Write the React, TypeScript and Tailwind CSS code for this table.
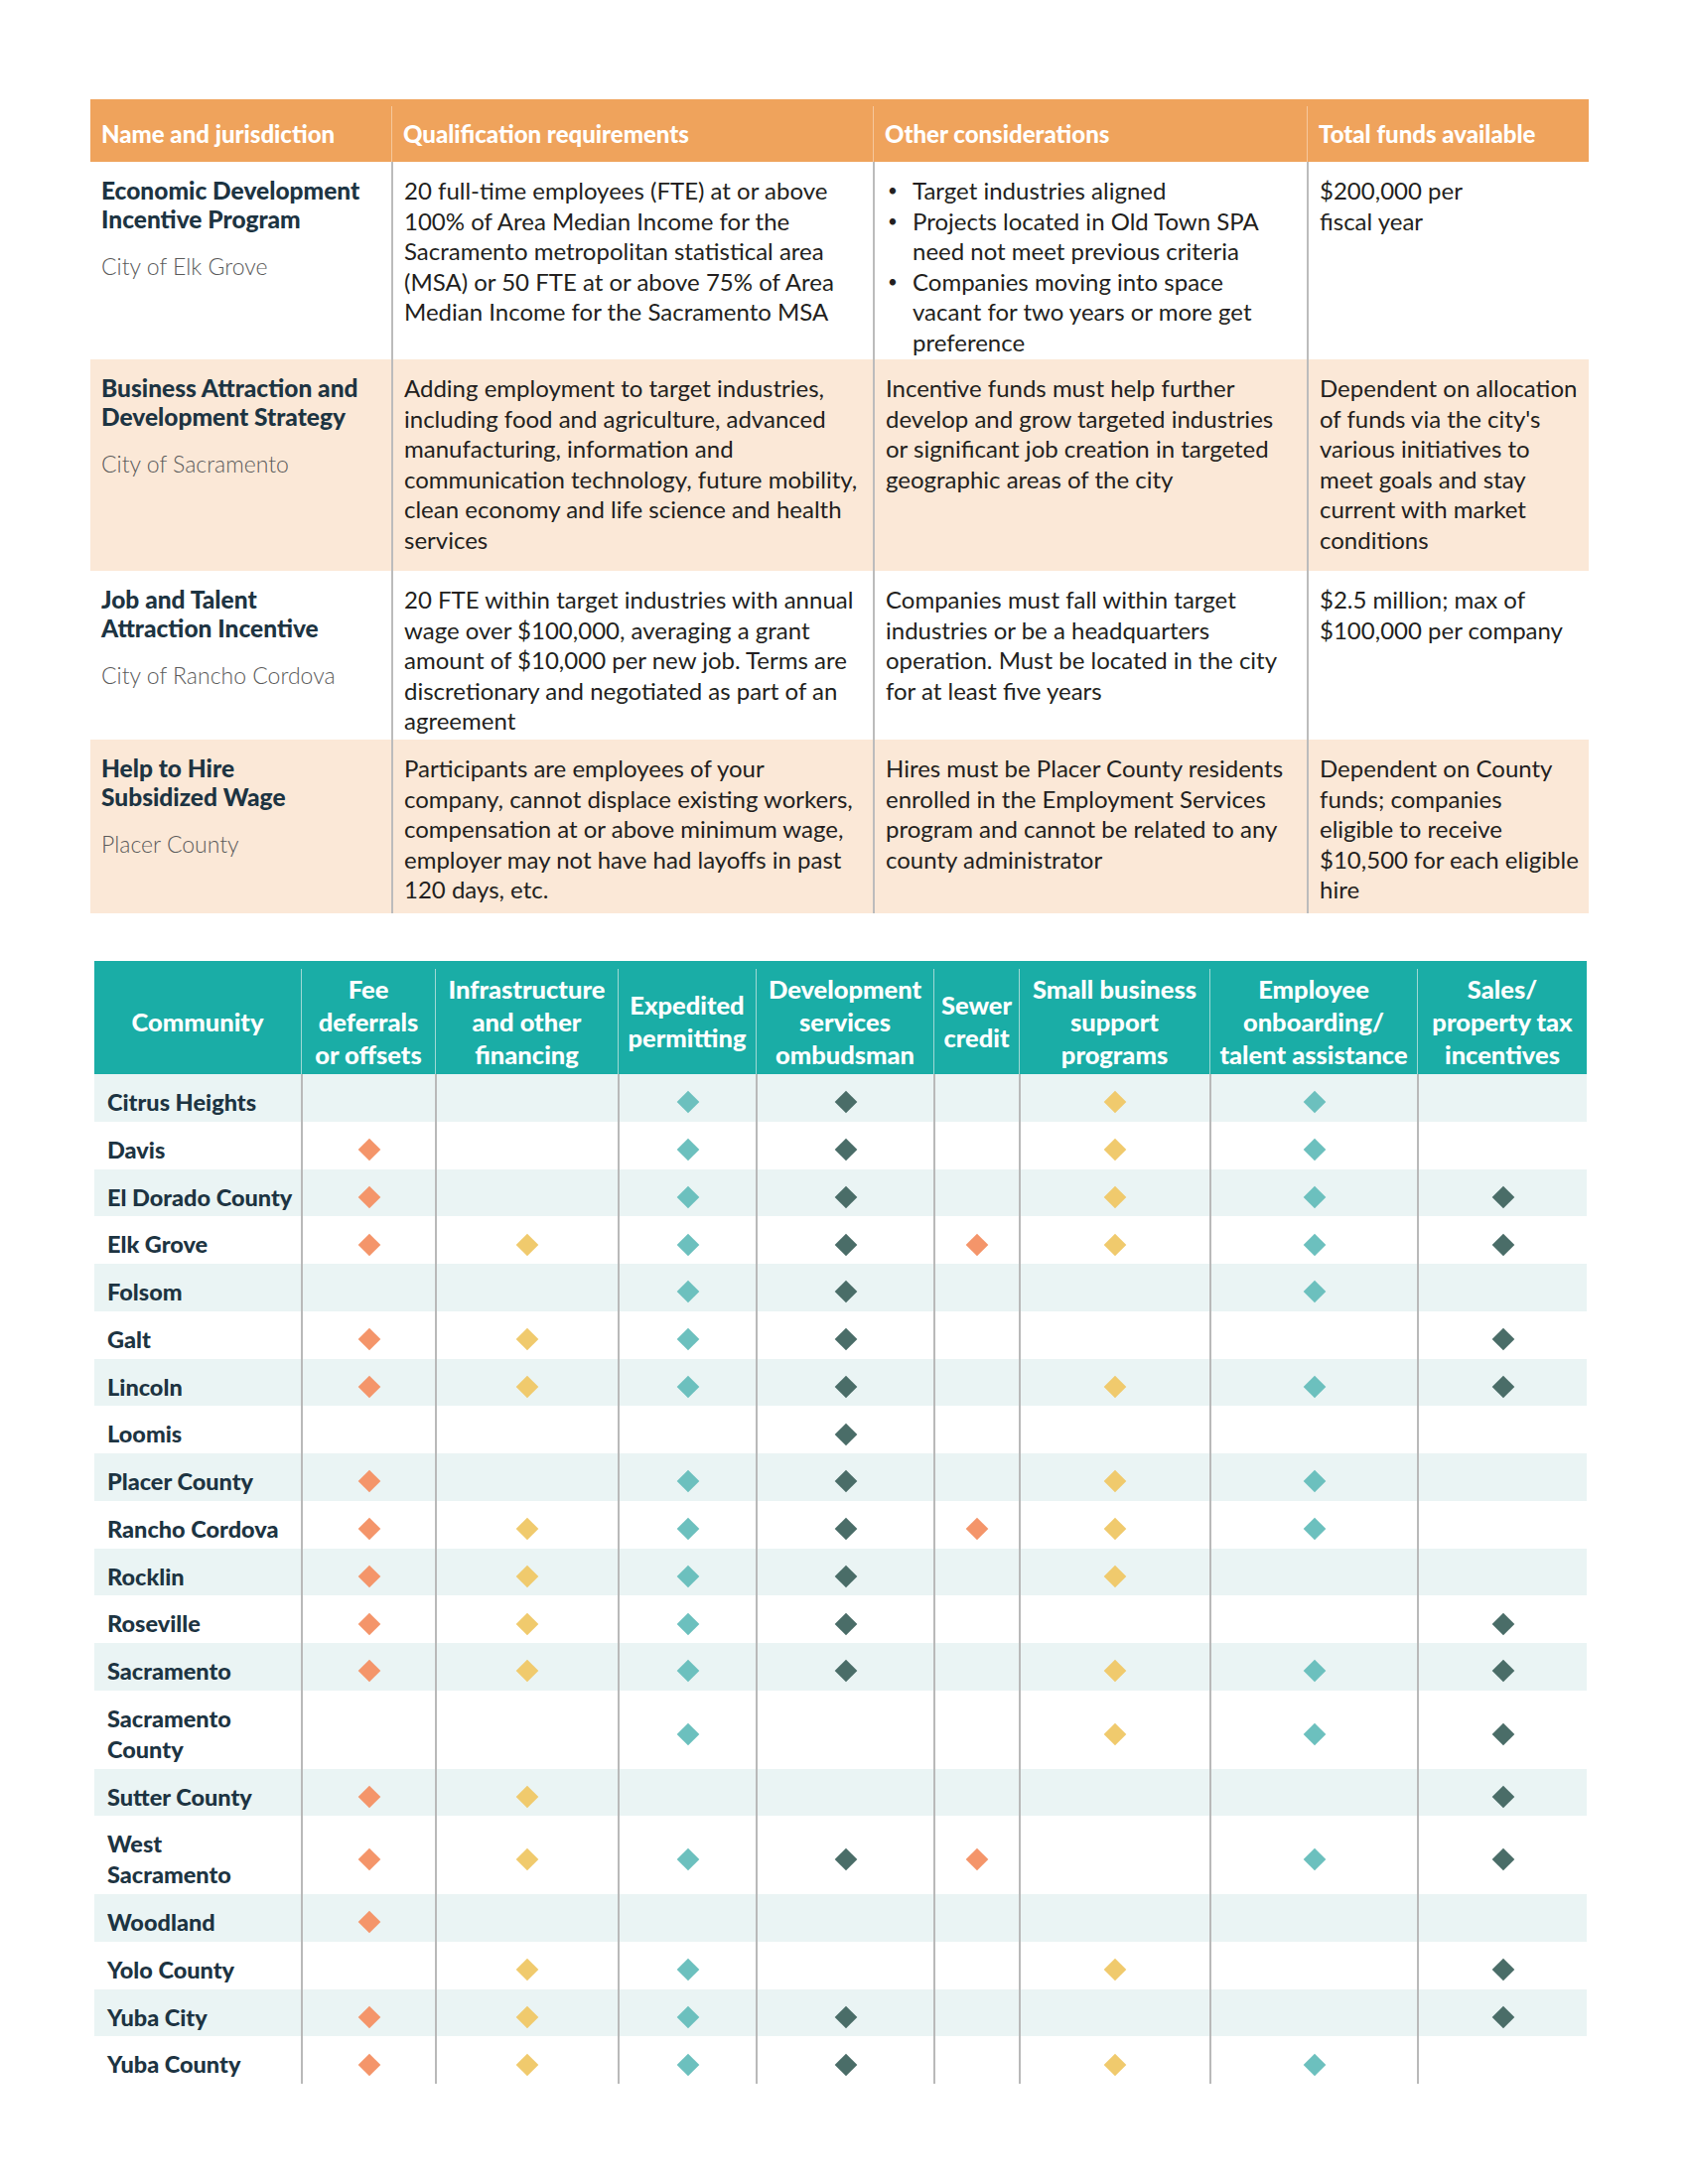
import React from "react";

type Prog = {
  name: string[];
  place: string;
  qual: string[];
  other: string[][] | string[];
  funds: string[];
  bullets?: boolean;
  tint: boolean;
  h: string;
};

const programs: Prog[] = [
  {
    name: ["Economic Development", "Incentive Program"],
    place: "City of Elk Grove",
    qual: [
      "20 full-time employees (FTE) at or above",
      "100% of Area Median Income for the",
      "Sacramento metropolitan statistical area",
      "(MSA) or 50 FTE at or above 75% of Area",
      "Median Income for the Sacramento MSA",
    ],
    other: [
      ["Target industries aligned"],
      ["Projects located in Old Town SPA", "need not meet previous criteria"],
      ["Companies moving into space", "vacant for two years or more get", "preference"],
    ],
    bullets: true,
    funds: ["$200,000 per", "fiscal year"],
    tint: false,
    h: "h-[199px]",
  },
  {
    name: ["Business Attraction and", "Development Strategy"],
    place: "City of Sacramento",
    qual: [
      "Adding employment to target industries,",
      "including food and agriculture, advanced",
      "manufacturing, information and",
      "communication technology, future mobility,",
      "clean economy and life science and health",
      "services",
    ],
    other: [
      "Incentive funds must help further",
      "develop and grow targeted industries",
      "or significant job creation in targeted",
      "geographic areas of the city",
    ],
    funds: [
      "Dependent on allocation",
      "of funds via the city's",
      "various initiatives to",
      "meet goals and stay",
      "current with market",
      "conditions",
    ],
    tint: true,
    h: "h-[213px]",
  },
  {
    name: ["Job and Talent", "Attraction Incentive"],
    place: "City of Rancho Cordova",
    qual: [
      "20 FTE within target industries with annual",
      "wage over $100,000, averaging a grant",
      "amount of $10,000 per new job. Terms are",
      "discretionary and negotiated as part of an",
      "agreement",
    ],
    other: [
      "Companies must fall within target",
      "industries or be a headquarters",
      "operation. Must be located in the city",
      "for at least five years",
    ],
    funds: ["$2.5 million; max of", "$100,000 per company"],
    tint: false,
    h: "h-[170px]",
  },
  {
    name: ["Help to Hire", "Subsidized Wage"],
    place: "Placer County",
    qual: [
      "Participants are employees of your",
      "company, cannot displace existing workers,",
      "compensation at or above minimum wage,",
      "employer may not have had layoffs in past",
      "120 days, etc.",
    ],
    other: [
      "Hires must be Placer County residents",
      "enrolled in the Employment Services",
      "program and cannot be related to any",
      "county administrator",
    ],
    funds: [
      "Dependent on County",
      "funds; companies",
      "eligible to receive",
      "$10,500 for each eligible",
      "hire",
    ],
    tint: true,
    h: "h-[175px]",
  },
];

const columns = [
  { label: ["Fee", "deferrals", "or offsets"], color: "bg-[#f4956a]" },
  { label: ["Infrastructure", "and other", "financing"], color: "bg-[#f0ca6d]" },
  { label: ["Expedited", "permitting"], color: "bg-[#6cc0be]" },
  { label: ["Development", "services", "ombudsman"], color: "bg-[#4a6d68]" },
  { label: ["Sewer", "credit"], color: "bg-[#f4956a]" },
  { label: ["Small business", "support", "programs"], color: "bg-[#f0ca6d]" },
  { label: ["Employee", "onboarding/", "talent assistance"], color: "bg-[#6cc0be]" },
  { label: ["Sales/", "property tax", "incentives"], color: "bg-[#4a6d68]" },
];

// x = program offered, . = not offered (one char per column above)
const communities: [string[], string][] = [
  [["Citrus Heights"], "..xx.xx."],
  [["Davis"], "x.xx.xx."],
  [["El Dorado County"], "x.xx.xxx"],
  [["Elk Grove"], "xxxxxxxx"],
  [["Folsom"], "..xx..x."],
  [["Galt"], "xxxx...x"],
  [["Lincoln"], "xxxx.xxx"],
  [["Loomis"], "...x...."],
  [["Placer County"], "x.xx.xx."],
  [["Rancho Cordova"], "xxxxxxx."],
  [["Rocklin"], "xxxx.x.."],
  [["Roseville"], "xxxx...x"],
  [["Sacramento"], "xxxx.xxx"],
  [["Sacramento", "County"], "..x..xxx"],
  [["Sutter County"], "xx.....x"],
  [["West", "Sacramento"], "xxxxx.xx"],
  [["Woodland"], "x......."],
  [["Yolo County"], ".xx..x.x"],
  [["Yuba City"], "xxxx...x"],
  [["Yuba County"], "xxxx.xx."],
];

const colWidths = ["w-[208px]", "w-[135px]", "w-[184px]", "w-[139px]", "w-[179px]", "w-[86px]", "w-[192px]", "w-[209px]", "w-[171px]"];

const Lines = ({ lines }: { lines: string[] }) => (
  <>
    {lines.map((l, i) => (
      <span key={i} className="block whitespace-nowrap">
        {l}
      </span>
    ))}
  </>
);

const Diamond = ({ color }: { color: string }) => (
  <span className={`block h-[16px] w-[16px] rotate-45 ${color}`} />
);

const ProgramTable = () => (
  <div className="w-[1509px]">
    <div className="flex h-[63px] bg-[#efa35c] pt-[7px] text-[24px] font-black text-white">
      <div className="flex w-[303px] items-center px-[11px]">Name and jurisdiction</div>
      <div className="flex w-[485px] items-center border-l border-[#f6c89c] px-[11px]">Qualification requirements</div>
      <div className="flex w-[437px] items-center border-l border-[#f6c89c] px-[11px]">Other considerations</div>
      <div className="flex w-[284px] items-center border-l border-[#f6c89c] px-[11px]">Total funds available</div>
    </div>
    {programs.map((p, i) => (
      <div
        key={i}
        className={`flex ${p.h} text-[24px] leading-[30.5px] text-[#231f20] ${p.tint ? "bg-[#fbe8d7]" : "bg-white"}`}
      >
        <div className="w-[303px] px-[11px] pt-[14px]">
          <div className="text-[24.5px] font-black leading-[29px] text-[#1d3442]">
            <Lines lines={p.name} />
          </div>
          <div className="mt-[18px] text-[23px] font-light text-[#5b5b5b]">{p.place}</div>
        </div>
        <div className="w-[485px] border-l-2 border-[#bcbcbc] px-[11px] pt-[14px]">
          <Lines lines={p.qual} />
        </div>
        <div className="w-[437px] border-l-2 border-[#bcbcbc] px-[11px] pt-[14px]">
          {p.bullets ? (
            (p.other as string[][]).map((b, j) => (
              <div key={j} className="flex">
                <span className="w-[27px] shrink-0 pl-[2px] text-[17px]">•</span>
                <div>
                  <Lines lines={b} />
                </div>
              </div>
            ))
          ) : (
            <Lines lines={p.other as string[]} />
          )}
        </div>
        <div className="w-[284px] border-l-2 border-[#bcbcbc] px-[11px] pt-[14px]">
          <Lines lines={p.funds} />
        </div>
      </div>
    ))}
  </div>
);

const IncentiveMatrix = () => (
  <div className="ml-[4px] w-[1503px]">
    <div className="flex h-[114px] bg-[#1aada6] pt-[8px] text-[25.5px] font-black leading-[33px] text-white">
      <div className={`${colWidths[0]} flex items-center justify-center`}>Community</div>
      {columns.map((c, i) => (
        <div
          key={i}
          className={`${colWidths[i + 1]} flex flex-col items-center justify-center border-l border-[#9fd8d4] text-center`}
        >
          <Lines lines={c.label} />
        </div>
      ))}
    </div>
    {communities.map(([name, marks], r) => (
      <div key={r} className={`flex ${r % 2 === 0 ? "bg-[#eaf4f4]" : "bg-white"}`}>
        <div className={`${colWidths[0]} pb-[3.75px] pl-[13px] pt-[13px] text-[23.5px] font-black leading-[31px] text-[#1d3442]`}>
          <Lines lines={name} />
        </div>
        {columns.map((c, i) => (
          <div
            key={i}
            className={`${colWidths[i + 1]} flex items-center justify-center border-l-2 border-[#b9b9b9] pt-[9px]`}
          >
            {marks[i] === "x" && <Diamond color={c.color} />}
          </div>
        ))}
      </div>
    ))}
  </div>
);

export default function App() {
  return (
    <div className="h-[2200px] w-[1700px] bg-white pl-[91px] pt-[100px] font-['Lato',sans-serif]">
      <ProgramTable />
      <div className="h-[48px]" />
      <IncentiveMatrix />
    </div>
  );
}
